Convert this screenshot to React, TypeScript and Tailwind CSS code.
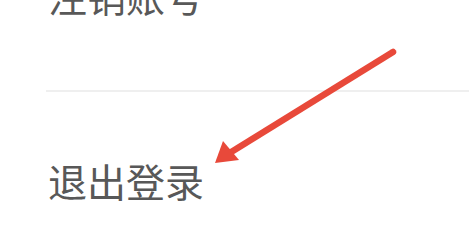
import React from "react";

export default function App() {
  return (
    <div className="relative w-[469px] h-[248px] overflow-hidden bg-white" style={{ fontFamily: '"Noto Sans CJK SC", "Noto Sans", sans-serif' }}>
      <div className="flex flex-col pl-[46px]">
        <div className="-mt-[25px] pb-[75px] border-b-2 border-[#efefef]">
          <div className="pl-[2px] text-[39px] leading-[40px] text-[#585858]">注销账号</div>
        </div>
        <div className="pt-[68px]">
          <div className="pl-[2px] text-[39px] leading-[40px] text-[#585858]">退出登录</div>
        </div>
      </div>
      <svg className="absolute left-0 top-0" width="469" height="248" viewBox="0 0 469 248">
        <line x1="393" y1="52" x2="228" y2="154" stroke="#e8493a" strokeWidth="6.5" strokeLinecap="round" />
        <polygon points="215,163 223,141 239,160" fill="#e8493a" />
      </svg>
    </div>
  );
}
